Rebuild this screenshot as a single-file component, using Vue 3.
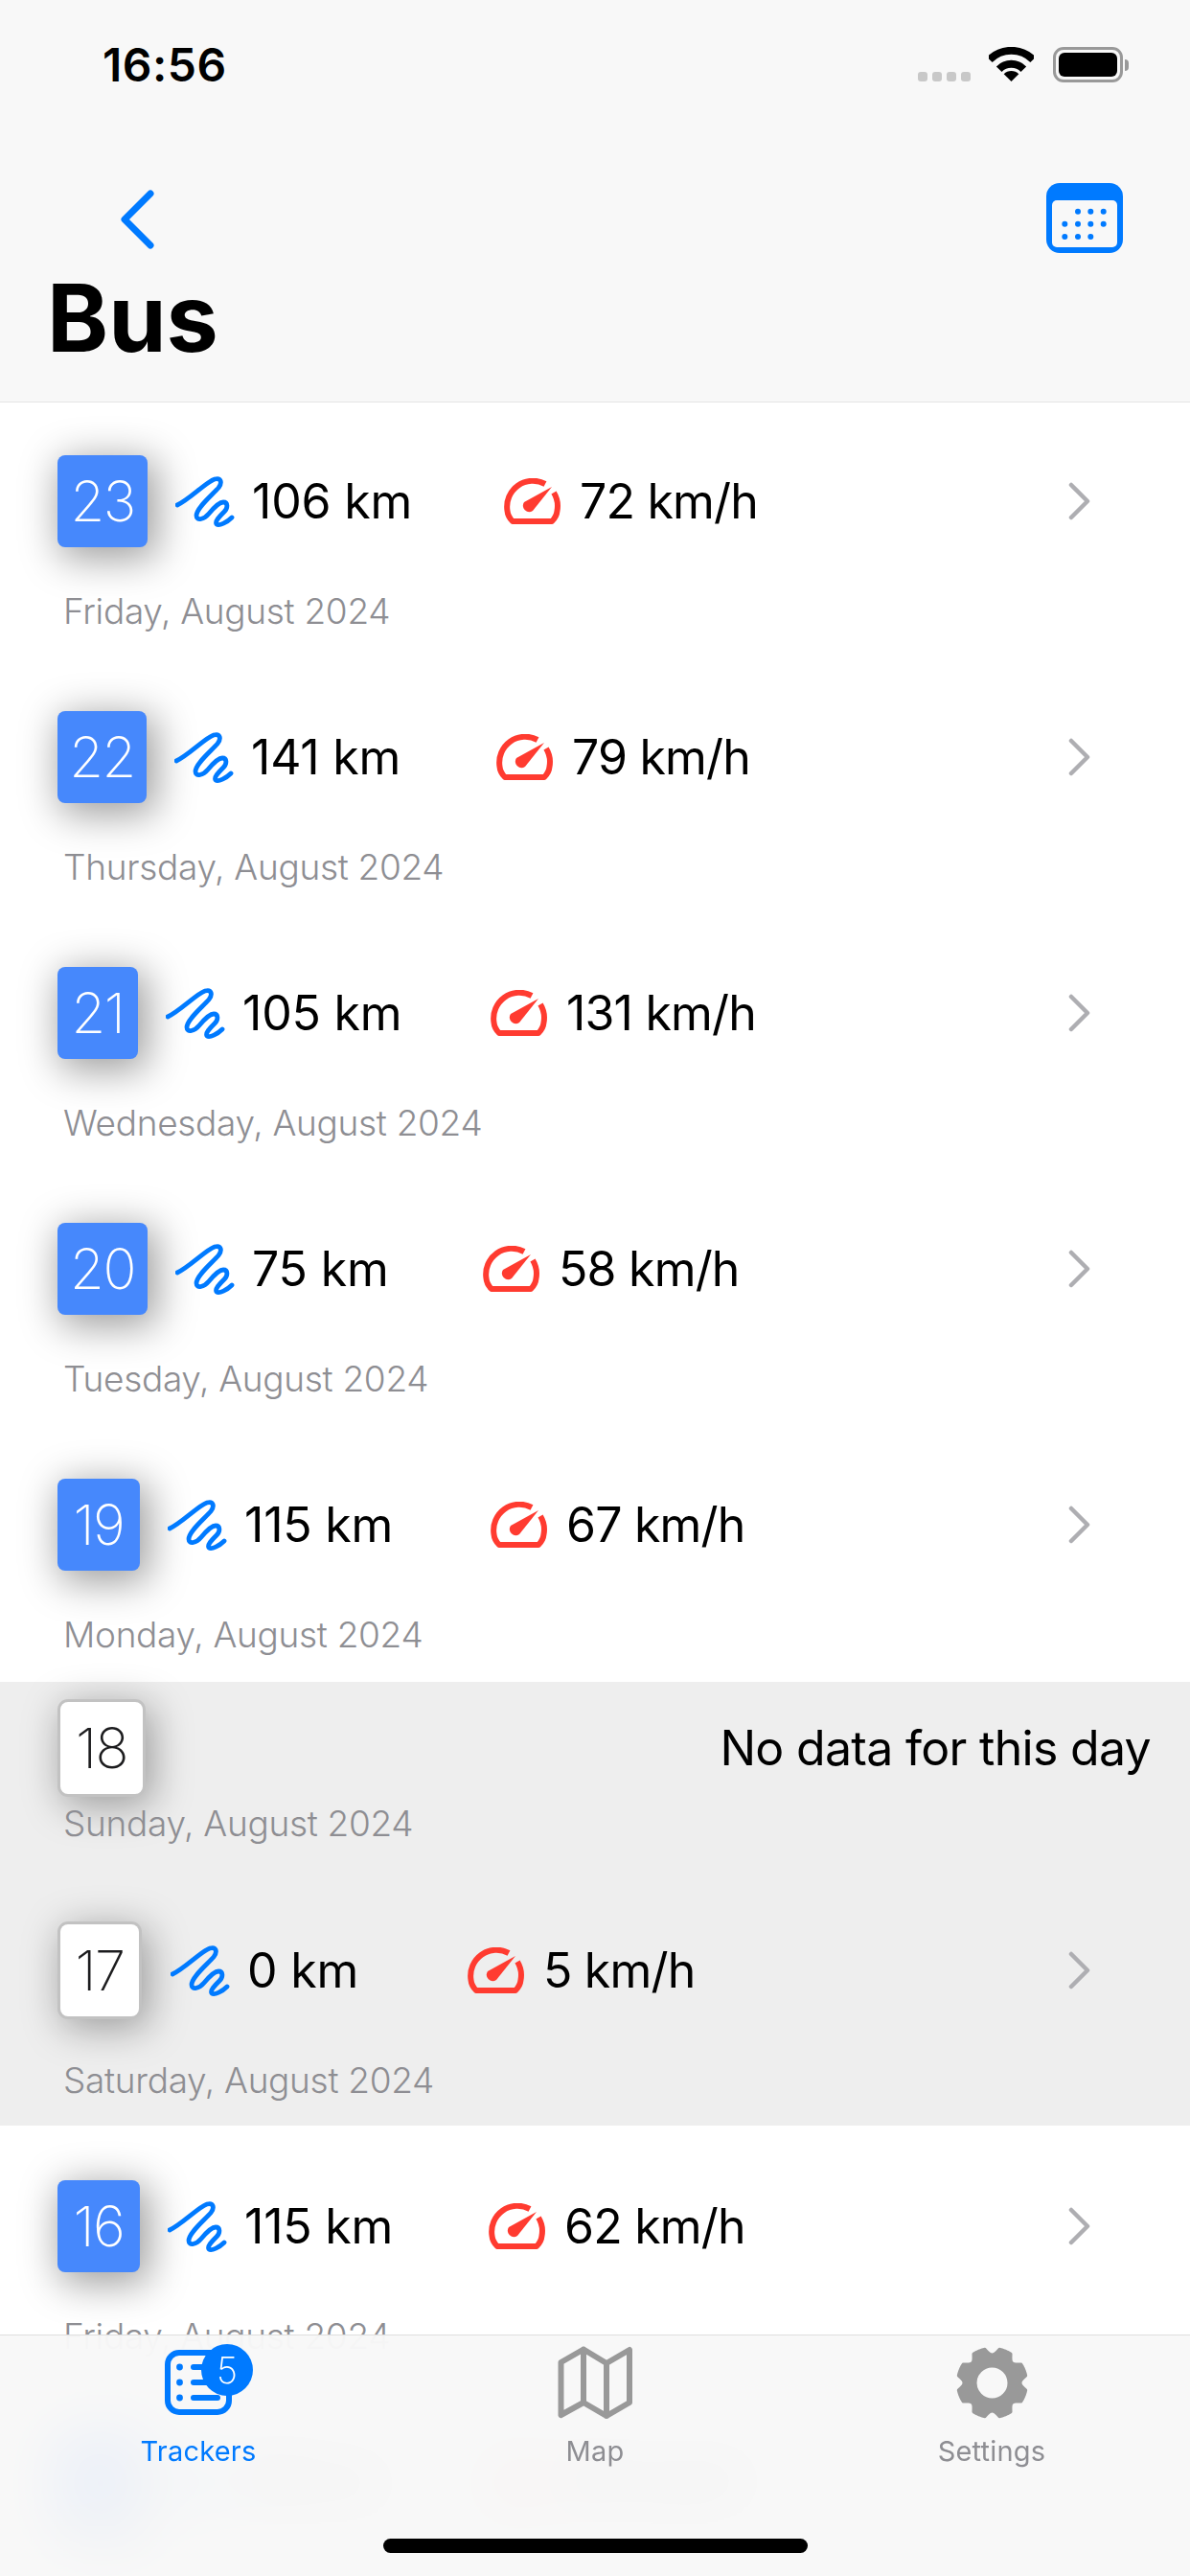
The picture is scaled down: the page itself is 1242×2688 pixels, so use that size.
<script setup>
const rows = [
  { day: 23, km: '106 km', speed: '72 km/h', label: 'Friday, August 2024', boxW: 94, speedX: 526 },
  { day: 22, km: '141 km', speed: '79 km/h', label: 'Thursday, August 2024', boxW: 93, speedX: 518 },
  { day: 21, km: '105 km', speed: '131 km/h', label: 'Wednesday, August 2024', boxW: 84, speedX: 512 },
  { day: 20, km: '75 km', speed: '58 km/h', label: 'Tuesday, August 2024', boxW: 94, speedX: 504 },
  { day: 19, km: '115 km', speed: '67 km/h', label: 'Monday, August 2024', boxW: 86, speedX: 512 },
  { day: 18, empty: true, label: 'Sunday, August 2024', boxW: 86 },
  { day: 17, muted: true, km: '0 km', speed: '5 km/h', label: 'Saturday, August 2024', boxW: 82, speedX: 488 },
  { day: 16, shifted: true, km: '115 km', speed: '62 km/h', label: 'Friday, August 2024', boxW: 86, speedX: 510 },
  { day: 15, km: '98 km', speed: '64 km/h', boxW: 86, speedX: 510 }
]

function kmWidth(r) {
  const iconX = r.muted ? 178 : 60 + r.boxW + 29
  return r.speedX - iconX + 'px'
}

const gearPath = (() => {
  const pts = []
  for (let i = 0; i < 240; i++) {
    const t = (i / 240) * Math.PI * 2
    const k = Math.min(1, ((1 - Math.cos(8 * t)) / 2) * 2.1)
    const r = 31 + 6.5 * k
    const x = 37.5 + r * Math.sin(t)
    const y = 37.5 - r * Math.cos(t)
    pts.push(x.toFixed(2) + ' ' + y.toFixed(2))
  }
  return 'M' + pts.join('L') + 'Z M53.5 37.5 A16 16 0 1 0 21.5 37.5 A16 16 0 1 0 53.5 37.5 Z'
})()
</script>

<template>
  <div class="screen">
    <header class="header">
      <div class="status">
        <span class="time">16:56</span>
        <div class="status-right">
          <div class="cells"><i></i><i></i><i></i><i></i></div>
          <svg class="wifi" width="47" height="36" viewBox="0 0 47 36">
            <path d="M23.5 36 L15.7 28.2 A11 11 0 0 1 31.3 28.2 Z" fill="#000" />
            <path d="M10.7 23.2 A18 18 0 0 1 36.3 23.2" fill="none" stroke="#000" stroke-width="8" />
            <path d="M0.8 13.3 A32 32 0 0 1 46.2 13.3" fill="none" stroke="#000" stroke-width="8" />
          </svg>
          <div class="battery"><div class="battery-fill"></div></div>
          <div class="battery-cap"></div>
        </div>
      </div>
      <div class="nav">
        <svg class="back" width="37" height="62" viewBox="0 0 37 62">
          <path d="M32 4 L5 31 L32 58" fill="none" stroke="#007aff" stroke-width="7" stroke-linecap="round" stroke-linejoin="round" />
        </svg>
        <svg width="80" height="73" viewBox="0 0 80 73">
          <rect width="80" height="73" rx="14" fill="#007aff" />
          <rect x="6" y="18" width="68" height="49" rx="5" fill="#f8f8f8" />
          <g fill="#007aff">
            <circle cx="33" cy="29.7" r="3" /><circle cx="46.3" cy="29.7" r="3" /><circle cx="59.7" cy="29.7" r="3" />
            <circle cx="19.3" cy="42.7" r="3" /><circle cx="33" cy="42.7" r="3" /><circle cx="46.3" cy="42.7" r="3" /><circle cx="59.7" cy="42.7" r="3" />
            <circle cx="19.3" cy="56" r="3" /><circle cx="33" cy="56" r="3" /><circle cx="46.3" cy="56" r="3" />
          </g>
        </svg>
      </div>
      <h1 class="title">Bus</h1>
    </header>

    <main class="list">
      <section
        v-for="r in rows"
        :key="r.day"
        class="row"
        :class="{ empty: r.empty, muted: r.muted, shifted: r.shifted }"
      >
        <div class="line">
          <div class="day" :style="{ width: r.boxW + 'px' }">{{ r.day }}</div>
          <span v-if="r.empty" class="no-data">No data for this day</span>
          <template v-else>
            <div class="km" :style="{ width: kmWidth(r) }">
              <svg width="62" height="53" viewBox="0 0 62 53">
                <path d="M2 30 C15 24 32 6 41 3 C48 1 49 7 45 12 C38 20 22 33 22 41 C22 47 30 45 35 39 C40 33 46 27 50 27 C55 27 55 33 51 37 C46 42 41 47 43 50 C46 52 54 48 59 43" fill="none" stroke="#007aff" stroke-width="4.8" stroke-linecap="round" stroke-linejoin="round" />
              </svg>
              <span class="val">{{ r.km }}</span>
            </div>
            <div class="speed">
              <svg width="59" height="48" viewBox="0 0 59 48">
                <path d="M43 6 A27 27 0 0 0 3.5 34 Q4 40 9 45 L50 45 Q55 40 55.5 34 A27 27 0 0 0 52 15" fill="none" stroke="#ff3b30" stroke-width="6" stroke-linejoin="round" />
                <path d="M50 9 L30 34 A6.5 6.5 0 0 1 21 25 Z" fill="#ff3b30" />
              </svg>
              <span class="val">{{ r.speed }}</span>
            </div>
            <svg class="chev" width="24" height="40" viewBox="0 0 24 40">
              <path d="M3 3 L20 20 L3 37" fill="none" stroke="#aeaeb2" stroke-width="4.5" stroke-linecap="round" stroke-linejoin="round" />
            </svg>
          </template>
        </div>
        <div v-if="r.label" class="label">{{ r.label }}</div>
      </section>
    </main>

    <nav class="tabs">
      <div class="tab active">
        <div class="tab-icon">
          <svg width="70" height="68" viewBox="0 0 70 68">
            <rect x="3" y="3" width="64" height="62" rx="12" fill="none" stroke="#007aff" stroke-width="6" />
            <g fill="#007aff">
              <circle cx="15.5" cy="18" r="3.4" /><circle cx="15.5" cy="34" r="3.4" /><circle cx="15.5" cy="50" r="3.4" />
            </g>
            <path d="M30 18H58M30 34H58M30 50H55" stroke="#007aff" stroke-width="6" stroke-linecap="round" />
          </svg>
          <span class="badge">5</span>
        </div>
        <span class="tab-label">Trackers</span>
      </div>
      <div class="tab">
        <div class="tab-icon">
          <svg width="78" height="76" viewBox="0 0 78 76">
            <path d="M3.5 17 L27 3.5 L51 18 L75 4 L75 59 L51 73 L27 59 L3.5 72 Z M27 3.5 V59 M51 18 V73" fill="none" stroke="#999" stroke-width="6" stroke-linejoin="round" stroke-linecap="round" />
          </svg>
        </div>
        <span class="tab-label">Map</span>
      </div>
      <div class="tab">
        <div class="tab-icon">
          <svg width="75" height="75" viewBox="0 0 75 75">
            <path :d="gearPath" fill="#999" fill-rule="evenodd" />
          </svg>
        </div>
        <span class="tab-label">Settings</span>
      </div>
      <div class="home"></div>
    </nav>
  </div>
</template>

<style scoped>
.screen {
  position: relative;
  width: 1242px;
  height: 2688px;
  overflow: hidden;
  background: #fff;
  font-family: Inter, "Liberation Sans", sans-serif;
  color: #000;
  display: flex;
  flex-direction: column;
}
.header {
  height: 420px;
  box-sizing: border-box;
  flex: none;
  background: #f8f8f8;
  border-bottom: 1px solid #e4e4e4;
}
.status {
  height: 136px;
  box-sizing: border-box;
  padding: 49px 64px 0 107px;
  display: flex;
  justify-content: space-between;
  align-items: flex-start;
}
.time {
  font-size: 48px;
  font-weight: 600;
  line-height: 38px;
  letter-spacing: 0.5px;
}
.status-right {
  display: flex;
  align-items: flex-start;
}
.cells {
  display: flex;
  gap: 5px;
  margin: 26px 19px 0 0;
}
.cells i {
  width: 10px;
  height: 10px;
  border-radius: 3px;
  background: #c8c8c8;
}
.wifi {
  margin-right: 20px;
}
.battery {
  width: 73px;
  height: 37px;
  box-sizing: border-box;
  border: 3px solid #999;
  border-radius: 11px;
  padding: 3px;
}
.battery-fill {
  width: 100%;
  height: 100%;
  background: #000;
  border-radius: 6px;
}
.battery-cap {
  width: 4px;
  height: 12px;
  margin: 13px 0 0 2px;
  background: #999;
  border-radius: 0 6px 6px 0;
}
.nav {
  height: 128px;
  box-sizing: border-box;
  padding: 55px 70px 0 125px;
  display: flex;
  justify-content: space-between;
  align-items: flex-start;
}
.nav .back {
  margin-top: 7px;
}
.title {
  margin: 20px 0 0 49px;
  font-size: 97px;
  font-weight: 700;
  line-height: 96px;
  letter-spacing: 0;
}
.list {
  flex: 1;
  overflow: hidden;
}
.row {
  height: 267px;
  box-sizing: border-box;
  padding: 55px 103px 0 60px;
  position: relative;
}
.row.shifted {
  padding-top: 57px;
}
.row.empty,
.row.muted {
  background: #eee;
}
.row.empty {
  height: 196px;
  padding-top: 21px;
  padding-right: 41px;
}
.row.muted {
  padding-top: 57px;
}
.line {
  display: flex;
  align-items: center;
  height: 96px;
}
.day {
  flex: none;
  height: 96px;
  margin-right: 29px;
  border-radius: 8px;
  background: #4688fc;
  color: #fff;
  font-size: 58px;
  font-weight: 250;
  letter-spacing: -1.5px;
  display: flex;
  align-items: center;
  justify-content: center;
  box-shadow: 6px 8px 40px 4px rgba(0, 0, 0, 0.38);
}
.empty .day,
.muted .day {
  background: #fff;
  color: #1c1c1e;
  margin-left: 3px;
  box-shadow: 0 0 0 3px #c2c2c2, 6px 8px 40px 4px rgba(0, 0, 0, 0.35);
}
.muted .day {
  margin-right: 33px;
}
.no-data {
  margin-left: auto;
  font-size: 50px;
  letter-spacing: -0.7px;
}
.km,
.speed {
  flex: none;
  display: flex;
  align-items: center;
}
.km {
  gap: 18px;
}
.speed {
  gap: 20px;
}
.val {
  font-size: 50px;
  line-height: 60px;
  white-space: nowrap;
}
.km .val {
  letter-spacing: -0.2px;
}
.speed .val {
  letter-spacing: -0.8px;
}
.chev {
  margin-left: auto;
}
.label {
  margin-top: 45px;
  padding-left: 6px;
  font-size: 37px;
  line-height: 44px;
  font-weight: 300;
  letter-spacing: -0.3px;
  color: #8e8e93;
  white-space: nowrap;
}
.empty .label {
  margin-top: 9px;
}
.tabs {
  position: absolute;
  left: 0;
  right: 0;
  bottom: 0;
  height: 252px;
  box-sizing: border-box;
  border-top: 1px solid #dedede;
  background: rgba(248, 248, 248, 0.93);
  backdrop-filter: blur(30px);
  display: grid;
  grid-template-columns: repeat(3, 1fr);
  align-items: start;
  padding-top: 11px;
}
.tab {
  display: flex;
  flex-direction: column;
  align-items: center;
  color: #8e8e93;
}
.tab.active {
  color: #007aff;
}
.tab-icon {
  position: relative;
  height: 76px;
  display: flex;
  align-items: center;
}
.tab-label {
  margin-top: 16px;
  font-size: 29px;
  line-height: 36px;
  font-weight: 400;
  letter-spacing: 0.2px;
}
.badge {
  position: absolute;
  left: 38px;
  top: -2px;
  width: 54px;
  height: 54px;
  border-radius: 50%;
  background: #007aff;
  color: #fff;
  font-size: 38px;
  font-weight: 200;
  display: flex;
  align-items: center;
  justify-content: center;
}
.home {
  position: absolute;
  left: 400px;
  bottom: 24px;
  width: 443px;
  height: 15px;
  border-radius: 8px;
  background: #000;
}
</style>

<style>
html, body { margin: 0; padding: 0; background: #fff; }
</style>
